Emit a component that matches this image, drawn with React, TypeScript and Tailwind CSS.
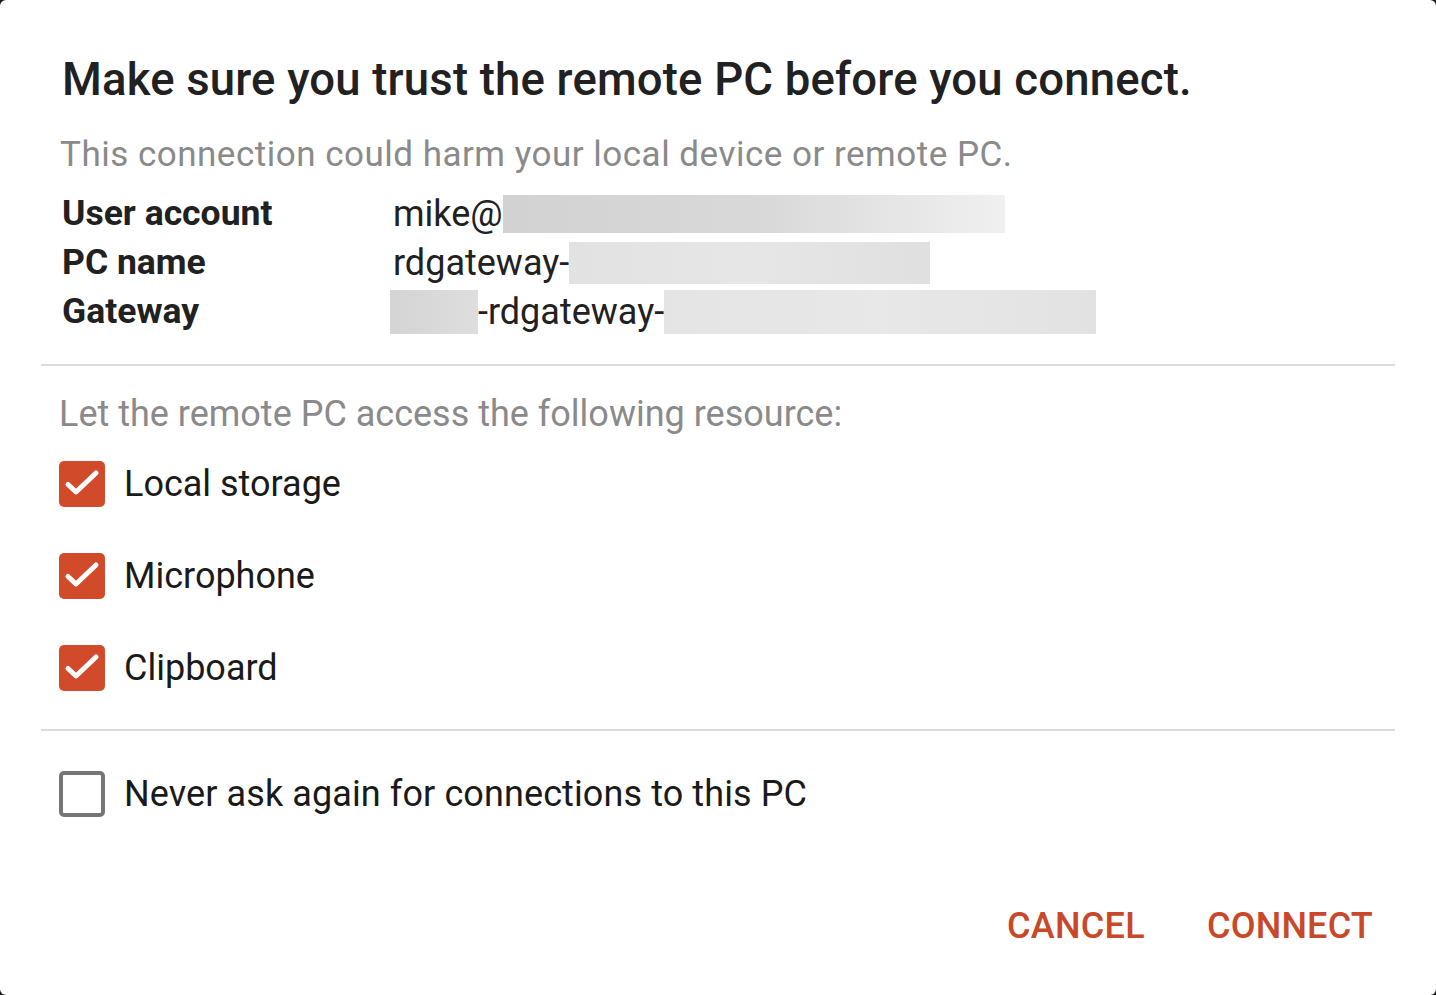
import React from "react";

function Check({ checked }: { checked: boolean }) {
  if (checked) {
    return (
      <div className="w-[46px] h-[46px] rounded-[5px] bg-[#d14b2b] shrink-0">
        <svg width="46" height="46" viewBox="0 0 46 46">
          <path d="M9 23.5 L17 31 L37 12" fill="none" stroke="#ffffff" strokeWidth="5" strokeLinecap="round" strokeLinejoin="round" />
        </svg>
      </div>
    );
  }
  return <div className="w-[46px] h-[46px] rounded-[5px] border-[4px] border-[#767676] bg-white shrink-0" />;
}

function Blur({ w, h, cls }: { w: number; h: number; cls: string }) {
  return <span className={"inline-block align-middle " + cls} style={{ width: w, height: h }} />;
}

export default function App() {
  return (
    <div className="w-[1436px] h-[995px] bg-[#1a1a1a] overflow-hidden" style={{ fontFamily: "Roboto, 'Noto Sans', sans-serif" }}>
      <div className="w-full h-full bg-white rounded-[6px] flex flex-col">
        <div className="pl-[62px] pt-[54px]">
          <h1 className="text-[45.5px] leading-[52px] font-medium text-[#212121] tracking-[0.18px]">
            Make sure you trust the remote PC before you connect.
          </h1>
          <p className="mt-[29px] -ml-[2px] text-[35px] leading-[40px] text-[#8a8a8a] tracking-[0.5px]">
            This connection could harm your local device or remote PC.
          </p>
          <div className="mt-[14px] flex flex-col text-[36px] text-[#212121]">
            <div className="flex h-[49px] items-center">
              <span className="w-[331px] text-[35.5px] font-bold">User account</span>
              <span className="flex items-center">
                mike@
                <Blur w={502} h={38} cls="bg-gradient-to-r from-[#d2d2d2] via-[#d8d8d8] to-[#f0f0f0]" />
              </span>
            </div>
            <div className="flex h-[49px] items-center">
              <span className="w-[331px] text-[35.5px] font-bold">PC name</span>
              <span className="flex items-center">
                rdgateway-
                <Blur w={361} h={42} cls="bg-gradient-to-r from-[#e2e2e2] via-[#e6e6e6] to-[#e0e0e0]" />
              </span>
            </div>
            <div className="flex h-[49px] items-center">
              <span className="w-[328px] text-[35.5px] font-bold">Gateway</span>
              <span className="flex items-center">
                <Blur w={88} h={44} cls="bg-gradient-to-r from-[#d4d4d4] to-[#dedede]" />
                -rdgateway-
                <Blur w={432} h={44} cls="bg-gradient-to-r from-[#e4e4e4] via-[#e8e8e8] to-[#e2e2e2]" />
              </span>
            </div>
          </div>
        </div>
        <div className="mx-[41px] mt-[28px] h-[2px] bg-[#dcdcdc]" />
        <div className="pl-[59px]">
          <p className="mt-[28px] text-[36px] leading-[40px] text-[#8a8a8a]">
            Let the remote PC access the following resource:
          </p>
          <div className="flex flex-col mt-[4px]">
            {["Local storage", "Microphone", "Clipboard"].map((t) => (
              <div key={t} className="h-[92px] flex items-center gap-[19px]">
                <Check checked />
                <span className="text-[36px] text-[#1a1a1a]">{t}</span>
              </div>
            ))}
          </div>
        </div>
        <div className="mx-[41px] mt-[15px] h-[2px] bg-[#dcdcdc]" />
        <div className="pl-[59px] mt-[17px] h-[92px] flex items-center gap-[19px]">
          <Check checked={false} />
          <span className="text-[36px] text-[#1a1a1a] tracking-[0.1px]">Never ask again for connections to this PC</span>
        </div>
        <div className="mt-[59px] flex justify-end pr-[63px] gap-[62px]">
          <button className="text-[36px] font-medium text-[#c9482a] tracking-[0.3px]">CANCEL</button>
          <button className="text-[36px] font-medium text-[#c9482a] tracking-[0.2px]">CONNECT</button>
        </div>
      </div>
    </div>
  );
}
